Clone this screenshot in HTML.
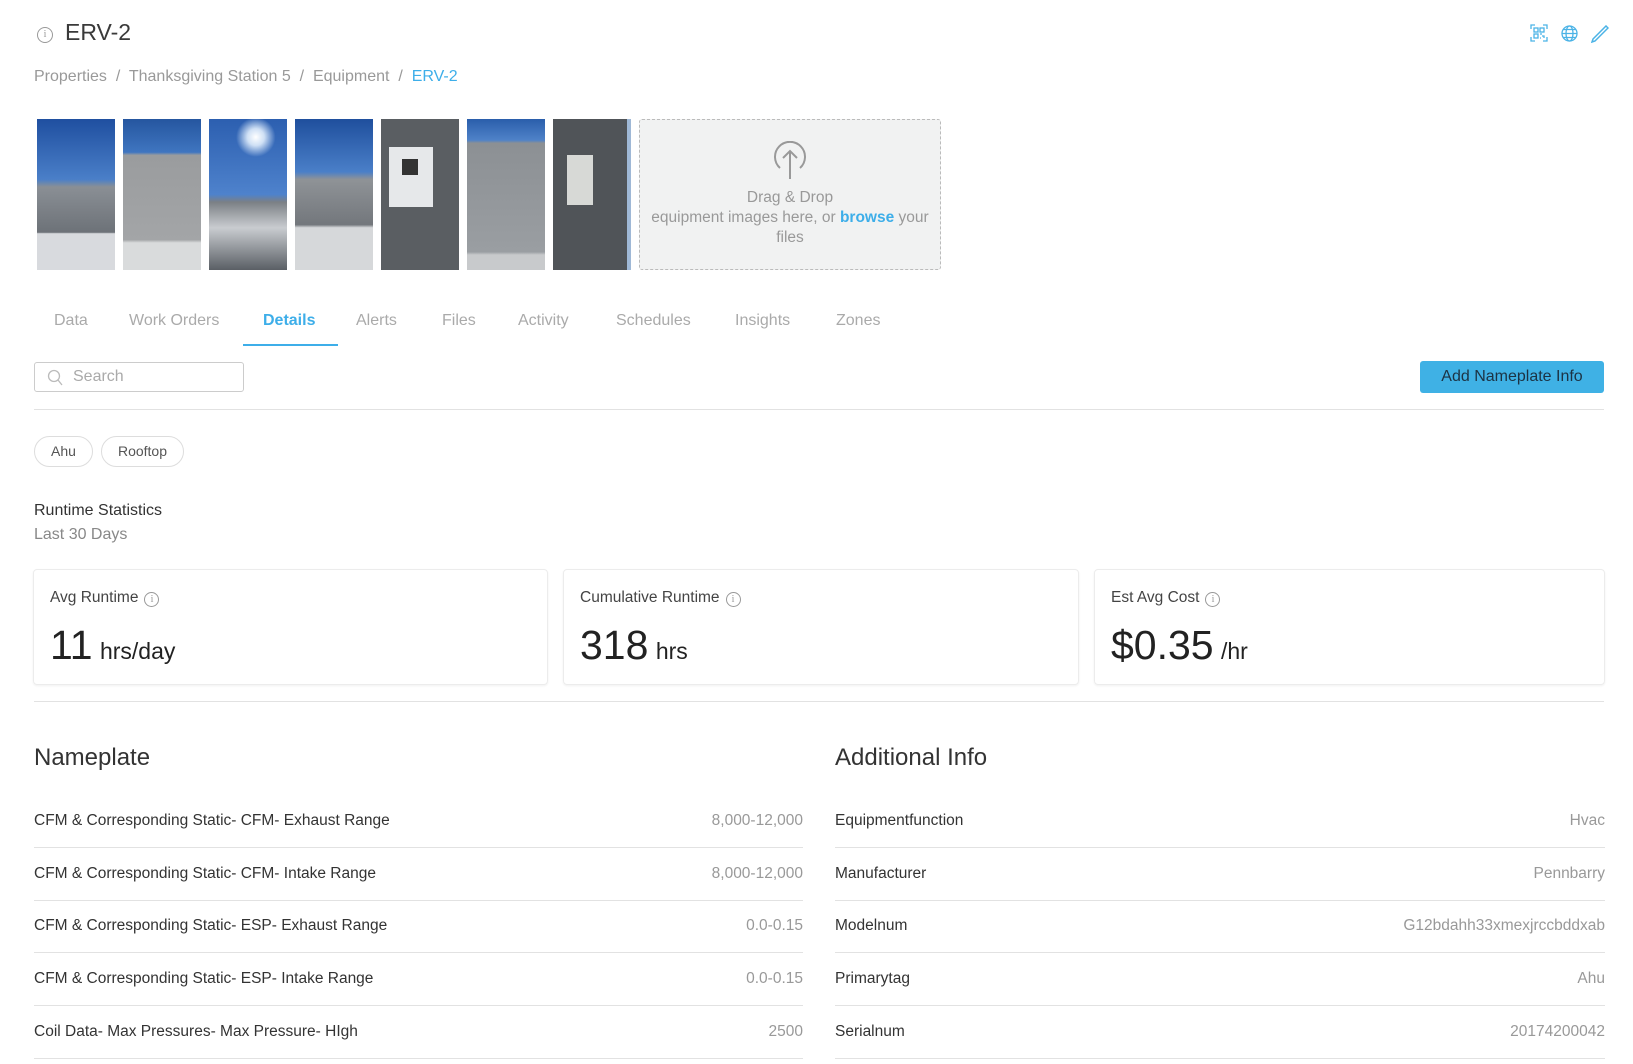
<!DOCTYPE html>
<html><head><meta charset="utf-8"><style>
*{margin:0;padding:0;box-sizing:border-box}
body{width:1633px;height:1064px;overflow:hidden;background:#fff;font-family:"Liberation Sans",sans-serif;color:#333;position:relative}
.a{position:absolute;white-space:nowrap}
.thumb{position:absolute;top:119px;width:78px;height:151px;overflow:hidden}
.hl{position:absolute;height:1px;background:#e2e2e2}
.card{position:absolute;top:569px;height:116px;border:1px solid #ececec;border-radius:4px;box-shadow:0 1px 2px rgba(0,0,0,.06)}
.card .l{position:absolute;left:16px;top:19px;font-size:15.5px;color:#444}
.card .n{position:absolute;left:16px;top:52px;font-size:41px;color:#222}
.card .n span{font-size:23px;margin-left:-4px}
.info{display:inline-block;width:15px;height:15px;border:1px solid #999;border-radius:50%;font-size:10px;line-height:13px;text-align:center;color:#999;vertical-align:0px;margin-left:6px;font-family:"Liberation Serif",serif}
.row{position:absolute;height:53px;border-bottom:1px solid #e2e2e2;font-size:15.5px}
.row .k{position:absolute;left:0;top:17px;color:#333}
.row .v{position:absolute;right:0;top:17px;color:#999}
.tab{position:absolute;top:312px;font-size:16px;color:#aaa}
</style></head><body>
<div class="a" style="left:37px;top:24px"><span class="info" style="width:16px;height:16px;line-height:14px;margin:0">i</span></div>
<div class="a" style="left:65px;top:19px;font-size:23px;color:#3a3a3a">ERV-2</div>
<svg class="a" style="left:1530px;top:24px" width="18" height="18" viewBox="0 0 18 18" fill="none" stroke="#4bb3e6" stroke-width="1.3"><path d="M1 5V1h4M13 1h4v4M17 13v4h-4M5 17H1v-4"/><rect x="4" y="4" width="4" height="4"/><rect x="10" y="4" width="4" height="4"/><rect x="4" y="10" width="4" height="4"/><path d="M10 10h2M12 12h2v2M10 14h1"/></svg>
<svg class="a" style="left:1561px;top:25px" width="17" height="17" viewBox="0 0 17 17" fill="none" stroke="#4bb3e6" stroke-width="1.3"><circle cx="8.5" cy="8.5" r="7.5"/><ellipse cx="8.5" cy="8.5" rx="3.5" ry="7.5"/><path d="M1 8.5h15M2.5 4.5h12M2.5 12.5h12"/></svg>
<svg class="a" style="left:1591px;top:25px" width="18" height="18" viewBox="0 0 18 18" fill="none" stroke="#4bb3e6" stroke-width="1.5"><path d="M1 17l1-3L15 1l2 2L4 16z"/></svg>
<div class="a" style="left:34px;top:68px;font-size:16px;color:#999">Properties &nbsp;/&nbsp; Thanksgiving Station 5 &nbsp;/&nbsp; Equipment &nbsp;/&nbsp; <span style="color:#3daee9">ERV-2</span></div>

<div class="thumb" style="left:37px;background:linear-gradient(#1f4fa0 0%,#4a7fc8 40%,#8a8f95 45%,#6d7278 75%,#d8dade 76%)"></div>
<div class="thumb" style="left:123px;background:linear-gradient(#25569f 0%,#3f75c0 22%,#9a9c9e 24%,#a3a5a7 80%,#d9dbdc 82%)"></div>
<div class="thumb" style="left:209px;background:radial-gradient(circle at 60% 12%,#fff 0,#cfe0f5 6%,transparent 14%),linear-gradient(#2c5fb0 0%,#4e82cc 50%,#7b8085 55%,#c9ccd0 72%,#5a5f65 100%)"></div>
<div class="thumb" style="left:295px;background:linear-gradient(#1f4f9d 0%,#4a7fc8 35%,#8f9397 40%,#73777c 70%,#d6d8da 72%)"></div>
<div class="thumb" style="left:381px;background:#5a5e62"><div style="position:absolute;left:8px;top:28px;width:44px;height:60px;background:#e6e8ea"></div><div style="position:absolute;left:21px;top:40px;width:16px;height:16px;background:#333"></div></div>
<div class="thumb" style="left:467px;background:linear-gradient(#2a5eab 0%,#4f82c8 14%,#8c9094 16%,#9a9ea2 88%,#c8cacc 90%)"></div>
<div class="thumb" style="left:553px;background:#505458"><div style="position:absolute;left:14px;top:36px;width:26px;height:50px;background:#d7d9d6"></div><div style="position:absolute;right:0;top:0;width:4px;height:151px;background:#9fb8d6"></div></div>
<div class="a" style="left:639px;top:119px;width:302px;height:151px;background:#f1f2f2;border:1px dashed #bbb;border-radius:3px;text-align:center;white-space:normal">
<svg style="position:absolute;left:133px;top:21px" width="34" height="38" viewBox="0 0 34 38" fill="none" stroke="#999" stroke-width="2"><path d="M7 27A15 15 0 1 1 27 27"/><path d="M17 38V10M10 17l7-7 7 7"/></svg>
<div style="position:absolute;left:0;right:0;top:68px;font-size:15.5px;color:#999;line-height:20px">Drag &amp; Drop<br><span>equipment images here, or <b style="color:#3daee9">browse</b> your</span><br>files</div></div>

<div class="tab" style="left:54px">Data</div>
<div class="tab" style="left:129px">Work Orders</div>
<div class="tab" style="left:263px;color:#3daee9;font-weight:bold">Details</div>
<div class="a" style="left:243px;top:344px;width:95px;height:2px;background:#3daee9"></div>
<div class="tab" style="left:356px">Alerts</div>
<div class="tab" style="left:442px">Files</div>
<div class="tab" style="left:518px">Activity</div>
<div class="tab" style="left:616px">Schedules</div>
<div class="tab" style="left:735px">Insights</div>
<div class="tab" style="left:836px">Zones</div>

<div class="a" style="left:34px;top:362px;width:210px;height:30px;border:1px solid #ccc;border-radius:3px">
<svg style="position:absolute;left:12px;top:6px" width="16" height="17" viewBox="0 0 16 17" fill="none" stroke="#bbb" stroke-width="1.3"><circle cx="7" cy="7" r="5.5"/><path d="M11 11l4 5"/></svg>
<span style="position:absolute;left:38px;top:5px;font-size:16px;color:#aaa">Search</span></div>
<div class="a" style="left:1420px;top:361px;width:184px;height:32px;background:#3fb1e5;border-radius:3px;font-size:16px;color:#1c3344;text-align:center;line-height:32px">Add Nameplate Info</div>
<div class="hl" style="left:34px;top:409px;width:1570px"></div>

<div class="a" style="left:34px;top:436px;width:59px;height:31px;border:1px solid #ddd;border-radius:16px;font-size:14px;color:#555;text-align:center;line-height:29px">Ahu</div>
<div class="a" style="left:101px;top:436px;width:83px;height:31px;border:1px solid #ddd;border-radius:16px;font-size:14px;color:#555;text-align:center;line-height:29px">Rooftop</div>

<div class="a" style="left:34px;top:502px;font-size:16px;color:#333">Runtime Statistics</div>
<div class="a" style="left:34px;top:526px;font-size:16px;color:#888">Last 30 Days</div>

<div class="card" style="left:33px;width:515px"><div class="l">Avg Runtime<span class="info">i</span></div><div class="n">11 <span>hrs/day</span></div></div>
<div class="card" style="left:563px;width:516px"><div class="l">Cumulative Runtime<span class="info">i</span></div><div class="n">318 <span>hrs</span></div></div>
<div class="card" style="left:1094px;width:511px"><div class="l">Est Avg Cost<span class="info">i</span></div><div class="n">$0.35 <span>/hr</span></div></div>
<div class="hl" style="left:34px;top:701px;width:1570px"></div>

<div class="a" style="left:34px;top:744px;font-size:24px;color:#333">Nameplate</div>
<div class="a" style="left:835px;top:744px;font-size:24px;color:#333">Additional Info</div>

<div class="row" style="left:34px;top:795px;width:769px"><span class="k">CFM &amp; Corresponding Static- CFM- Exhaust Range</span><span class="v">8,000-12,000</span></div>
<div class="row" style="left:34px;top:848px;width:769px"><span class="k">CFM &amp; Corresponding Static- CFM- Intake Range</span><span class="v">8,000-12,000</span></div>
<div class="row" style="left:34px;top:900px;width:769px"><span class="k">CFM &amp; Corresponding Static- ESP- Exhaust Range</span><span class="v">0.0-0.15</span></div>
<div class="row" style="left:34px;top:953px;width:769px"><span class="k">CFM &amp; Corresponding Static- ESP- Intake Range</span><span class="v">0.0-0.15</span></div>
<div class="row" style="left:34px;top:1006px;width:769px"><span class="k">Coil Data- Max Pressures- Max Pressure- HIgh</span><span class="v">2500</span></div>

<div class="row" style="left:835px;top:795px;width:770px"><span class="k">Equipmentfunction</span><span class="v">Hvac</span></div>
<div class="row" style="left:835px;top:848px;width:770px"><span class="k">Manufacturer</span><span class="v">Pennbarry</span></div>
<div class="row" style="left:835px;top:900px;width:770px"><span class="k">Modelnum</span><span class="v">G12bdahh33xmexjrccbddxab</span></div>
<div class="row" style="left:835px;top:953px;width:770px"><span class="k">Primarytag</span><span class="v">Ahu</span></div>
<div class="row" style="left:835px;top:1006px;width:770px"><span class="k">Serialnum</span><span class="v">20174200042</span></div>
</body></html>
